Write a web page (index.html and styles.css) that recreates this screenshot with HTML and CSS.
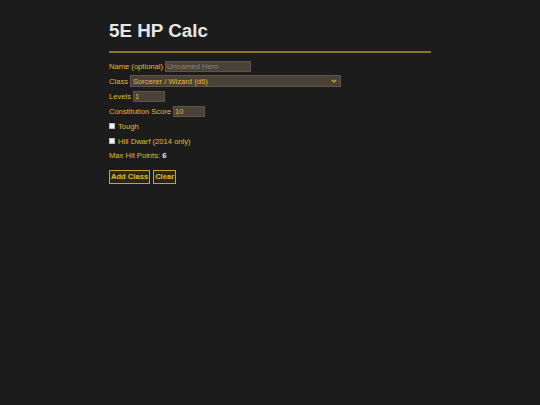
FILE: index.html
```html
<!DOCTYPE html>
<html>
<head>
<meta charset="utf-8">
<link rel="stylesheet" href="styles.css">
</head>
<body>
<div class="container">
  <h1 class="title">5E HP Calc</h1>
  <div class="rule"></div>
  <div class="row"><label class="lbl">Name (optional)</label><input class="field name-field" type="text" placeholder="Unnamed Hero"></div>
  <div class="row"><label class="lbl">Class</label><div class="select"><span>Sorcerer / Wizard (d6)</span><svg class="chev" width="6" height="4" viewBox="0 0 6 4"><path d="M0.8 0.8 L3 3 L5.2 0.8" fill="none" stroke="#d8b428" stroke-width="1.2"/></svg></div></div>
  <div class="row"><label class="lbl">Levels</label><input class="field small-field" type="text" value="1"></div>
  <div class="row"><label class="lbl">Constitution Score</label><input class="field small-field" type="text" value="10"></div>
  <div class="row"><span class="box"></span><label class="lbl">Tough</label></div>
  <div class="row"><span class="box"></span><label class="lbl">Hill Dwarf (2014 only)</label></div>
  <div class="row total"><span class="lbl">Max Hit Points: <b class="hp">6</b></span></div>
  <div class="buttons"><button class="btn">Add Class</button><button class="btn">Clear</button></div>
</div>
</body>
</html>
```

FILE: styles.css
```css
html, body {
  margin: 0;
  padding: 0;
  background: #1c1c1c;
  height: 100%;
}
body {
  font-family: "Liberation Sans", Arial, sans-serif;
  font-size: 7.6px;
  color: #e0bc2a;
}
.container {
  width: 322px;
  margin: 0 auto;
  padding-top: 20px;
}
.title {
  margin: 0;
  font-size: 18.8px;
  line-height: 22px;
  font-weight: bold;
  color: #e6e6e6;
}
.rule {
  height: 2px;
  background: #8c7426;
  margin-top: 9px;
  margin-bottom: 7px;
}
.row {
  display: flex;
  align-items: center;
  height: 12px;
  margin-bottom: 3px;
}
.row.total { margin-top: -1px; margin-bottom: 0; }
.lbl {
  margin-right: 2px;
  white-space: nowrap;
}
.field {
  box-sizing: border-box;
  height: 11px;
  padding: 0 1px;
  border: 1px solid #5e554a;
  background: #4a4238;
  color: #e0bc2a;
  font-family: "Liberation Sans", Arial, sans-serif;
  font-size: 7.6px;
  outline: none;
}
.field::placeholder { color: #8a8278; }
.name-field { width: 86px; }
.small-field { width: 32px; }
.select {
  box-sizing: border-box;
  width: 211px;
  height: 12px;
  display: flex;
  align-items: center;
  justify-content: space-between;
  padding: 0 3px 0 2px;
  background: #4a4238;
  border: 1px solid #5e554a;
}
.box {
  box-sizing: border-box;
  width: 6px;
  height: 6px;
  background: #f2f2f2;
  border: 1px solid #b8b8b8;
  margin-right: 3px;
}
.hp { color: #f0f0f0; }
.buttons {
  display: flex;
  gap: 3px;
  margin-top: 9px;
}
.btn {
  font-family: "Liberation Sans", Arial, sans-serif;
  font-size: 7.6px;
  font-weight: bold;
  color: #e0bc2a;
  background: #2a2616;
  border: 1px solid #c8a626;
  padding: 2px 1px;
  height: 14px;
  line-height: 8px;
}
```
